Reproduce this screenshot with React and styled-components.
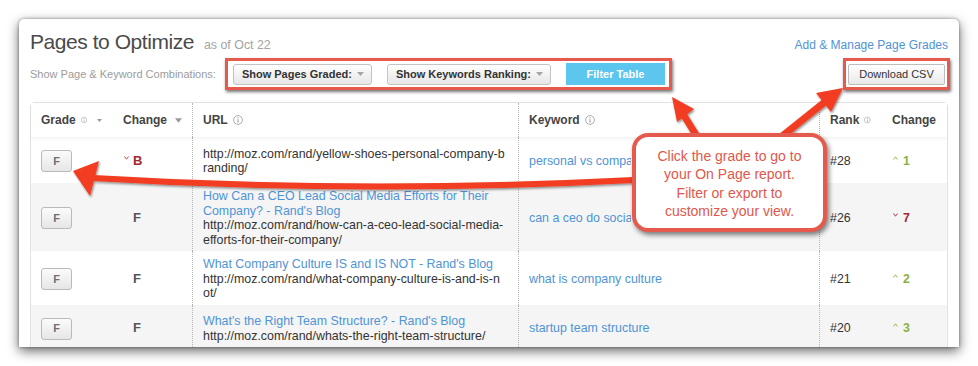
import React from 'react';
import styled, { createGlobalStyle } from 'styled-components';

const GlobalStyle = createGlobalStyle`
  html, body { margin: 0; padding: 0; background: #fff; }
  body { font-family: "Liberation Sans", Arial, sans-serif; }
`;

const RED = '#e65a4d';
const ARROW = '#f23d20';
const LINK = '#4f94d5';
const COLS = '81px 80px 326px 301px 62px 66px';

const Page = styled.div`
  position: relative;
  width: 978px;
  height: 366px;
  overflow: hidden;
  padding: 19px 0 0 19px;
  box-sizing: border-box;
`;

const Panel = styled.div`
  width: 940px;
  height: 328px;
  box-sizing: border-box;
  padding: 11px 11px 0;
  background: #fff;
  border-radius: 5px 5px 0 0;
  box-shadow: 0 4px 12px rgba(0, 0, 0, 0.6), 0 0 3px rgba(0, 0, 0, 0.4);
  overflow: hidden;
`;

const TitleRow = styled.div`
  display: flex;
  align-items: baseline;
  justify-content: space-between;
  height: 24px;
`;

const Title = styled.h1`
  margin: 0;
  font-size: 21px;
  line-height: 24px;
  font-weight: normal;
  letter-spacing: -0.45px;
  color: #4a4a4a;
  span {
    font-size: 12.4px;
    letter-spacing: 0;
    color: #a3a3a3;
    margin-left: 10px;
  }
`;

const TopLink = styled.a`
  font-size: 12px;
  color: ${LINK};
  text-decoration: none;
`;

const ControlsRow = styled.div`
  display: flex;
  align-items: center;
  margin-top: 4px;
  height: 32px;
`;

const Label = styled.span`
  font-size: 11px;
  color: #9c9c9c;
  margin-right: 9px;
`;

const Annot = styled.div`
  display: flex;
  align-items: center;
  height: 32px;
  box-sizing: border-box;
  border: 3px solid ${RED};
  background: #fff;
  box-shadow: 1px 2px 3px rgba(0, 0, 0, 0.55);
  padding: ${(p) => p.$pad};
  gap: 15px;
  margin-left: ${(p) => (p.$right ? 'auto' : '0')};
  margin-right: ${(p) => (p.$right ? '-2px' : '0')};
`;

const DropBtn = styled.div`
  display: flex;
  align-items: center;
  gap: 5px;
  height: 21px;
  box-sizing: border-box;
  padding: 0 7px 0 8px;
  border: 1px solid #c4c4c4;
  border-radius: 3px;
  background: linear-gradient(#fefefe, #e7e7e7);
  font-size: 11px;
  font-weight: bold;
  color: #333;
  white-space: nowrap;
`;

const FilterBtn = styled.div`
  width: 99px;
  height: 22px;
  display: flex;
  align-items: center;
  justify-content: center;
  background: #5cc6ef;
  color: #fff;
  font-size: 11px;
  font-weight: bold;
`;

const PlainBtn = styled.div`
  width: 97px;
  height: 21px;
  box-sizing: border-box;
  display: flex;
  align-items: center;
  justify-content: center;
  border: 1px solid #bdbdbd;
  border-radius: 2px;
  background: linear-gradient(#ffffff, #e9e9e9);
  font-size: 11px;
  color: #333;
`;

const Table = styled.div`
  margin-top: 12px;
  border: 1px solid #e2e2e2;
  border-bottom: none;
  border-radius: 5px 5px 0 0;
`;

const Row = styled.div`
  display: grid;
  grid-template-columns: ${COLS};
  min-height: ${(p) => (p.$head ? '34px' : '46px')};
  background: ${(p) => (p.$alt ? '#f5f5f5' : '#fff')};
  position: ${(p) => (p.$head ? 'relative' : 'static')};
  z-index: ${(p) => (p.$head ? 1 : 'auto')};
  box-shadow: ${(p) => (p.$head ? '0 2px 3px rgba(0,0,0,0.05)' : 'none')};
  font-size: 12.4px;
  line-height: 14.5px;
  color: #333;
`;

const Cell = styled.div`
  display: flex;
  flex-direction: column;
  justify-content: center;
  padding: 6px 10px 4px ${(p) => p.$pl || 10}px;
  border-left: ${(p) => (p.$dotted ? '1px dotted #b5b5b5' : 'none')};
  white-space: nowrap;
  overflow: hidden;
`;

const HeadCell = styled(Cell)`
  flex-direction: row;
  justify-content: flex-start;
  align-items: center;
  padding-top: 5px;
  padding-bottom: 5px;
  font-size: 12px;
  font-weight: bold;
  color: #444;
  svg {
    margin-left: ${(p) => p.$gap || 5}px;
  }
`;

const LinkText = styled.span`
  color: ${LINK};
  max-width: ${(p) => (p.$clip ? '102px' : 'none')};
  overflow: hidden;
`;

const GradeBtn = styled.div`
  width: 31px;
  height: 22px;
  box-sizing: border-box;
  display: flex;
  align-items: center;
  justify-content: center;
  border: 1px solid #bababa;
  border-radius: 3px;
  background: linear-gradient(#fbfbfb, #e6e6e6);
  font-size: 11px;
  font-weight: bold;
  color: #707070;
`;

const Delta = styled.div`
  display: flex;
  align-items: flex-start;
  font-weight: bold;
  font-size: ${(p) => (p.$big ? '13px' : '12.4px')};
  color: ${(p) => p.$color};
`;

const CaretSlot = styled.span`
  width: ${(p) => p.$w}px;
  display: flex;
  padding-top: 2px;
  padding-left: 1px;
  box-sizing: border-box;
`;

const Callout = styled.div`
  position: absolute;
  left: 632px;
  top: 133px;
  width: 195px;
  height: 99px;
  box-sizing: border-box;
  z-index: 3;
  border: 4px solid ${RED};
  border-radius: 16px;
  background: #fff;
  box-shadow: 2px 3px 5px rgba(0, 0, 0, 0.5);
  display: flex;
  align-items: center;
  justify-content: center;
  text-align: center;
  font-size: 14px;
  line-height: 18.3px;
  color: #e0584b;
  padding-top: 2px;
`;

const Overlay = styled.svg`
  position: absolute;
  left: 0;
  top: 0;
  z-index: 2;
  pointer-events: none;
`;

const Info = () => (
  <svg width="10" height="10" viewBox="0 0 10 10">
    <circle cx="5" cy="5" r="4.4" fill="none" stroke="#ababab" strokeWidth="1" />
    <rect x="4.5" y="4.3" width="1.1" height="3.3" fill="#a0a0a0" />
    <rect x="4.5" y="2.3" width="1.1" height="1.1" fill="#a0a0a0" />
  </svg>
);

const Sort = ({ gap }) => (
  <svg width="8" height="5" viewBox="0 0 8 5" style={{ marginLeft: gap }}>
    <polygon points="0,0 8,0 4,5" fill="#9a9a9a" />
  </svg>
);

const Drop = () => (
  <svg width="7" height="4" viewBox="0 0 7 4">
    <polygon points="0,0 7,0 3.5,4" fill="#a5a5a5" />
  </svg>
);

const Caret = ({ up, color }) => (
  <svg width="5" height="4" viewBox="0 0 5 4">
    <polyline
      points={up ? '0.5,3.5 2.5,0.8 4.5,3.5' : '0.5,0.5 2.5,3.2 4.5,0.5'}
      fill="none"
      stroke={color}
      strokeWidth="0.9"
    />
  </svg>
);

const GREEN = '#8cb043';
const DARKRED = '#a2282b';

const rows = [
  {
    change: { up: false, val: 'B' },
    lines: [
      { t: 'http://moz.com/rand/yellow-shoes-personal-company-b' },
      { t: 'randing/' },
    ],
    keyword: 'personal vs company branding',
    covered: true,
    rank: '#28',
    delta: { up: true, val: '1' },
  },
  {
    change: null,
    lines: [
      { t: 'How Can a CEO Lead Social Media Efforts for Their', link: true },
      { t: "Company? - Rand's Blog", link: true },
      { t: 'http://moz.com/rand/how-can-a-ceo-lead-social-media-' },
      { t: 'efforts-for-their-company/' },
    ],
    keyword: 'can a ceo do social media',
    covered: true,
    rank: '#26',
    delta: { up: false, val: '7' },
  },
  {
    change: null,
    lines: [
      { t: "What Company Culture IS and IS NOT - Rand's Blog", link: true },
      { t: 'http://moz.com/rand/what-company-culture-is-and-is-n' },
      { t: 'ot/' },
    ],
    keyword: 'what is company culture',
    rank: '#21',
    delta: { up: true, val: '2' },
  },
  {
    change: null,
    lines: [
      { t: "What's the Right Team Structure? - Rand's Blog", link: true },
      { t: 'http://moz.com/rand/whats-the-right-team-structure/' },
    ],
    keyword: 'startup team structure',
    rank: '#20',
    delta: { up: true, val: '3' },
  },
];

const Arrows = () => (
  <Overlay width="978" height="366" viewBox="0 0 978 366">
    <defs>
      <filter id="sh" x="-10%" y="-30%" width="120%" height="160%">
        <feDropShadow dx="1" dy="1.5" stdDeviation="1" floodColor="#000" floodOpacity="0.45" />
      </filter>
    </defs>
    <g filter="url(#sh)" fill={ARROW}>
      <path d="M 634 180 Q 360 194 93 178" fill="none" stroke={ARROW} strokeWidth="6" />
      <polygon points="73,171 99,161 90,196" />
      <line x1="683" y1="114" x2="698" y2="138" stroke={ARROW} strokeWidth="7" />
      <polygon points="672,97 694,109 677,122" />
      <line x1="826" y1="101" x2="781" y2="137" stroke={ARROW} strokeWidth="7" />
      <polygon points="843,88 831,112 816,93" />
    </g>
  </Overlay>
);

export default function App() {
  return (
    <>
      <GlobalStyle />
      <Page>
        <Panel>
          <TitleRow>
            <Title>
              Pages to Optimize<span>as of Oct 22</span>
            </Title>
            <TopLink href="#">Add &amp; Manage Page Grades</TopLink>
          </TitleRow>
          <ControlsRow>
            <Label>Show Page &amp; Keyword Combinations:</Label>
            <Annot $pad="0 4px 0 5px">
              <DropBtn>
                Show Pages Graded: <Drop />
              </DropBtn>
              <DropBtn>
                Show Keywords Ranking: <Drop />
              </DropBtn>
              <FilterBtn>Filter Table</FilterBtn>
            </Annot>
            <Annot $right $pad="0 2px">
              <PlainBtn>Download CSV</PlainBtn>
            </Annot>
          </ControlsRow>
          <Table>
            <Row $head>
              <HeadCell>
                Grade <Info /> <Sort gap={10} />
              </HeadCell>
              <HeadCell $pl={11}>
                Change <Sort gap={8} />
              </HeadCell>
              <HeadCell $dotted>
                URL <Info />
              </HeadCell>
              <HeadCell $dotted>
                Keyword <Info />
              </HeadCell>
              <HeadCell $dotted>
                Rank <Info />
              </HeadCell>
              <HeadCell $pl={11}>Change</HeadCell>
            </Row>
            {rows.map((r, i) => (
              <Row key={i} $alt={i % 2 === 1}>
                <Cell>
                  <GradeBtn>F</GradeBtn>
                </Cell>
                <Cell $pl={11}>
                  <Delta $big $color={r.change ? DARKRED : '#555'}>
                    <CaretSlot $w={10}>
                      {r.change && <Caret up={r.change.up} color="#c0392b" />}
                    </CaretSlot>
                    {r.change ? r.change.val : 'F'}
                  </Delta>
                </Cell>
                <Cell $dotted>
                  {r.lines.map((l, j) =>
                    l.link ? <LinkText key={j}>{l.t}</LinkText> : <span key={j}>{l.t}</span>
                  )}
                </Cell>
                <Cell $dotted>
                  <LinkText $clip={r.covered}>{r.keyword}</LinkText>
                </Cell>
                <Cell $dotted>{r.rank}</Cell>
                <Cell $pl={11}>
                  <Delta $color={r.delta.up ? GREEN : DARKRED}>
                    <CaretSlot $w={11}>
                      <Caret up={r.delta.up} color={r.delta.up ? GREEN : DARKRED} />
                    </CaretSlot>
                    {r.delta.val}
                  </Delta>
                </Cell>
              </Row>
            ))}
          </Table>
        </Panel>
        <Arrows />
        <Callout>
          Click the grade to go to
          <br />
          your On Page report.
          <br />
          Filter or export to
          <br />
          customize your view.
        </Callout>
      </Page>
    </>
  );
}
